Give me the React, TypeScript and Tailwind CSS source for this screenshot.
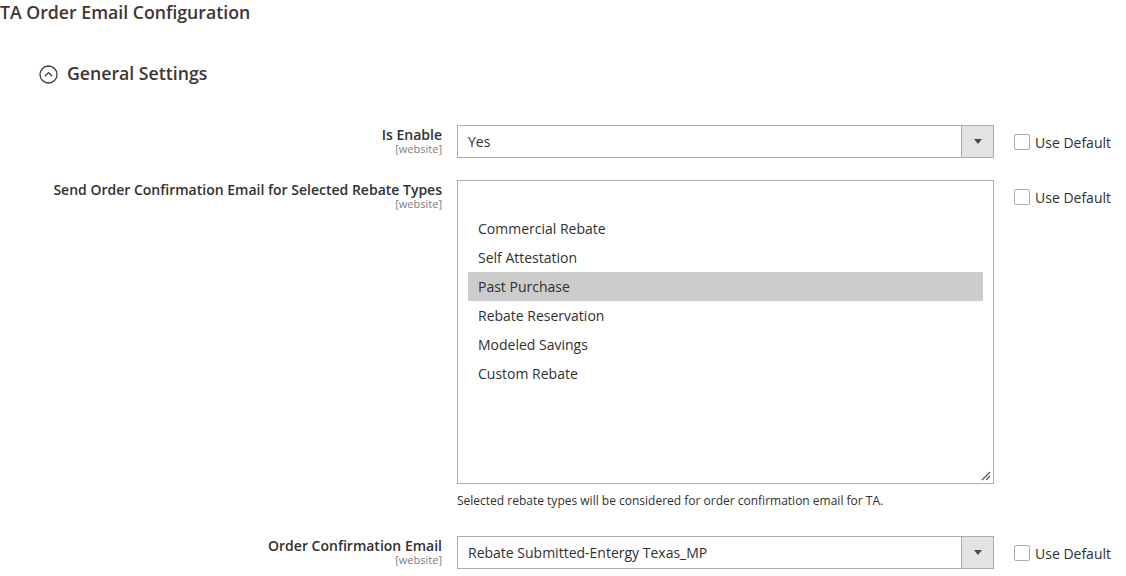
import type { ReactNode } from "react";

const font = { fontFamily: '"Open Sans", "Liberation Sans", sans-serif' };

function UseDefault() {
  return (
    <div className="flex items-center h-[34px] pl-[20px]">
      <span className="w-[16px] h-[16px] border border-[#adadad] rounded-[2px] bg-white" />
      <span className="ml-[5px] text-[14px] text-[#303030]">Use Default</span>
    </div>
  );
}

function Label({ text }: { text: string }) {
  return (
    <div className="w-[442px] shrink-0 text-right pt-[1px]">
      <div className="text-[14px] leading-[18px] font-semibold text-[#303030]">{text}</div>
      <div className="text-[11px] leading-[10px] text-[#808080]">[website]</div>
    </div>
  );
}

function Select({ value }: { value: string }) {
  return (
    <div className="flex w-[537px] h-[33px] border border-[#adadad] bg-white">
      <div className="flex-1 flex items-center pl-[10px] text-[14px] text-[#303030]">{value}</div>
      <div className="w-[32px] border-l border-[#adadad] bg-[#e3e3e3] flex items-center justify-center">
        <span className="w-0 h-0 border-l-[4px] border-r-[4px] border-t-[5px] border-l-transparent border-r-transparent border-t-[#514943]" />
      </div>
    </div>
  );
}

function Row({ label, children, className = "" }: { label: string; children: ReactNode; className?: string }) {
  return (
    <div className={`flex items-start ${className}`}>
      <Label text={label} />
      <div className="ml-[15px]">{children}</div>
      <UseDefault />
    </div>
  );
}

const options = [
  "",
  "Commercial Rebate",
  "Self Attestation",
  "Past Purchase",
  "Rebate Reservation",
  "Modeled Savings",
  "Custom Rebate",
];

export default function App() {
  return (
    <div className="w-[1126px] h-[576px] bg-white overflow-hidden" style={font}>
      <h1 className="text-[17.7px] leading-[24px] font-semibold text-[#41362f]">TA Order Email Configuration</h1>

      <div className="flex items-center mt-[37px] ml-[39px] h-[24px]">
        <svg width="19" height="19" viewBox="0 0 19 19" className="mt-[2px]">
          <circle cx="9.5" cy="9.5" r="8.5" fill="none" stroke="#41362f" strokeWidth="1.3" />
          <path d="M5.8 11.3 L9.5 7.6 L13.2 11.3" fill="none" stroke="#41362f" strokeWidth="1.3" />
        </svg>
        <span className="ml-[9px] text-[17.7px] font-semibold text-[#41362f]">General Settings</span>
      </div>

      <Row label="Is Enable" className="mt-[40px]">
        <Select value="Yes" />
      </Row>

      <Row label="Send Order Confirmation Email for Selected Rebate Types" className="mt-[21px]">
        <div className="relative w-[537px] h-[304px] border border-[#adadad] bg-white pt-[4px] px-[10px]">
          {options.map((o, i) => (
            <div
              key={i}
              className={`h-[29px] flex items-center pl-[10px] text-[14px] text-[#303030] ${
                o === "Past Purchase" ? "bg-[#cccccc]" : ""
              }`}
            >
              {o}
            </div>
          ))}
          <svg width="10" height="10" viewBox="0 0 10 10" className="absolute right-[2px] bottom-[2px]">
            <path d="M1 9 L9 1 M5 9 L9 5" stroke="#555" strokeWidth="1.2" />
          </svg>
        </div>
        <div className="mt-[8px] text-[12px] leading-[18px] text-[#303030]">
          Selected rebate types will be considered for order confirmation email for TA.
        </div>
      </Row>

      <Row label="Order Confirmation Email" className="mt-[26px]">
        <Select value="Rebate Submitted-Entergy Texas_MP" />
      </Row>
    </div>
  );
}
